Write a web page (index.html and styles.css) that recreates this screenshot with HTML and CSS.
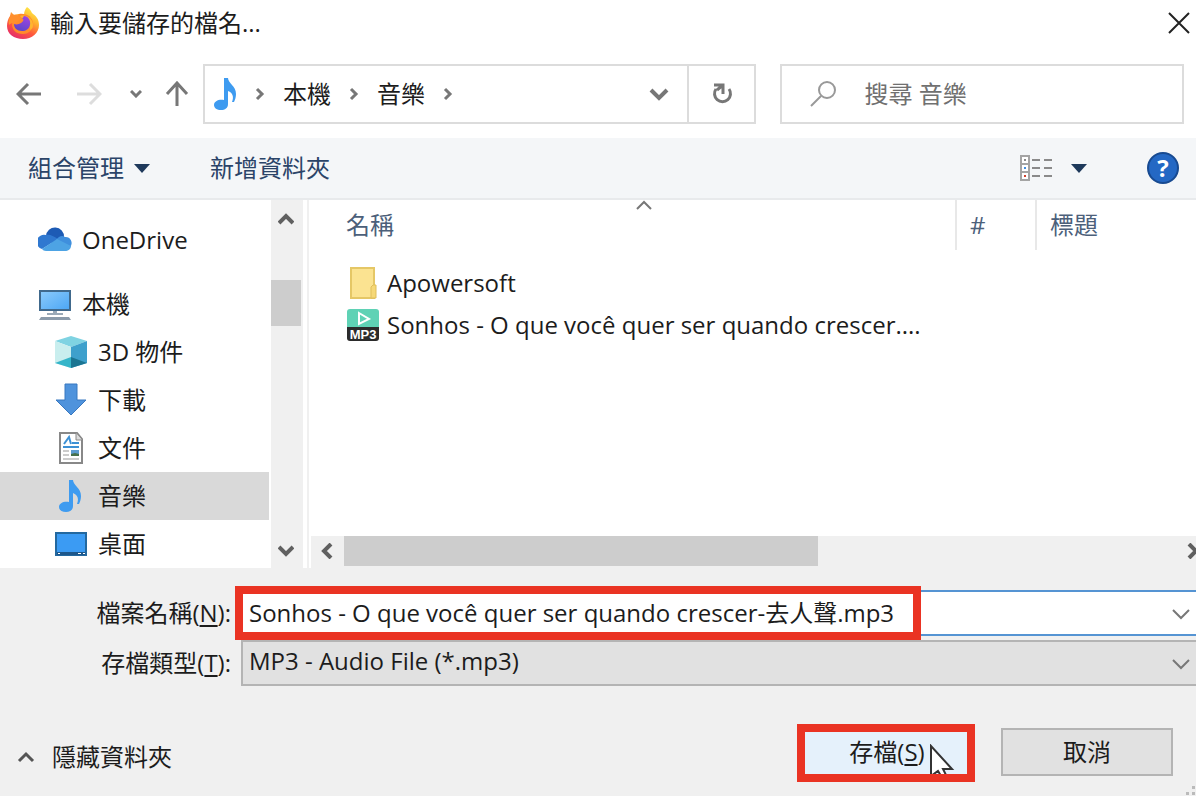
FILE: index.html
```html
<!DOCTYPE html>
<html lang="zh-Hant">
<head>
    <meta charset="UTF-8">
    <title>輸入要儲存的檔名...</title>
    <link rel="stylesheet" href="styles.css">
</head>
<body>

    <!-- title bar -->
    <header class="titlebar">
        <svg class="icon" width="34" height="34" viewBox="0 0 34 34">
            <defs>
                <linearGradient id="fox" x1="0.8" y1="0" x2="0.25" y2="1">
                    <stop offset="0" stop-color="#fff04a"/>
                    <stop offset="0.35" stop-color="#ffb02e"/>
                    <stop offset="0.65" stop-color="#ff5a3c"/>
                    <stop offset="1" stop-color="#e32a6d"/>
                </linearGradient>
                <linearGradient id="globe" x1="0.7" y1="0" x2="0.3" y2="1">
                    <stop offset="0" stop-color="#a044e0"/>
                    <stop offset="1" stop-color="#5b46c8"/>
                </linearGradient>
            </defs>
            <path d="M21 1c3 2 4 4 5 6c4 3 7 6 7 12c0 8-7 14-16 14S1 28 1 20c0-4 1-7 3-10l1-4l3 3c2-1 4-1 6-1c2 0 3 0 4 1c0-3 1-6 3-8z" fill="url(#fox)"/>
            <path d="M13 8c8-1 13 3 14 9c1 6-4 11-10 11c-7 0-11-4-11-10z" fill="#ff8a2b"/>
            <path d="M14 10c7-2 13 3 13 9c0 3-1 4-3 5c1-4-2-9-6-10z" fill="#ffb52e"/>
            <path d="M18 10c4 0 7 4 6 9c-1 4-4 6-8 6c-5 0-8-3-8-7c3 1 5 0 7-1c3-2 3-4 1-4z" fill="url(#globe)"/>
            <path d="M5 9c4-1 8 0 11 4c-3 0-4 2-7 5c-2-1-4-1-6 1c-1-4 0-7 2-10z" fill="#ff8f2d"/>
        </svg>
        <h1>輸入要儲存的檔名...</h1>
        <button class="close" aria-label="關閉">
            <svg width="22" height="22" viewBox="0 0 22 22"><path d="M1 1l20 20M21 1L1 21"/></svg>
        </button>
    </header>

    <!-- navigation -->
    <nav class="navbar">
        <button class="nav-btn" aria-label="上一頁">
            <svg width="26" height="24" viewBox="0 0 26 24"><path d="M25 12H3M12 2L2 12l10 10"/></svg>
        </button>
        <button class="nav-btn off" aria-label="下一頁">
            <svg width="26" height="24" viewBox="0 0 26 24"><path d="M1 12h22M14 2l10 10l-10 10"/></svg>
        </button>
        <button class="nav-btn small" aria-label="最近的位置">
            <svg width="12" height="8" viewBox="0 0 12 8"><path d="M1 1l5 5l5-5"/></svg>
        </button>
        <button class="nav-btn up" aria-label="上一層">
            <svg width="24" height="26" viewBox="0 0 24 26"><path d="M12 25V3M2 13L12 2l10 11"/></svg>
        </button>
        <div class="address">
            <svg class="icon" width="24" height="34" viewBox="4 0 24 34"><use href="#note"/></svg>
            <svg class="sep" width="10" height="14" viewBox="0 0 10 14"><path d="M2 2l5 5l-5 5"/></svg>
            <a href="#">本機</a>
            <svg class="sep" width="10" height="14" viewBox="0 0 10 14"><path d="M2 2l5 5l-5 5"/></svg>
            <a href="#">音樂</a>
            <svg class="sep" width="10" height="14" viewBox="0 0 10 14"><path d="M2 2l5 5l-5 5"/></svg>
            <button class="history" aria-label="先前的位置">
                <svg width="20" height="14" viewBox="0 0 20 14"><path d="M2 3l8 8l8-8"/></svg>
            </button>
            <button class="refresh" aria-label="重新整理">
                <svg width="22" height="24" viewBox="0 0 22 24"><path d="M18 7a8 8 0 1 1-13 0M3 3h9v9M12 3L6 8"/></svg>
            </button>
        </div>
        <label class="search">
            <svg width="26" height="26" viewBox="0 0 26 26"><circle cx="17" cy="9" r="8"/><path d="M11 15L1 25"/></svg>
            <input type="search" placeholder="搜尋 音樂" aria-label="搜尋 音樂">
        </label>
    </nav>

    <!-- command bar -->
    <div class="toolbar">
        <button>組合管理 <svg width="16" height="9" viewBox="0 0 16 9"><path d="M0 0h16L8 9z"/></svg></button>
        <button>新增資料夾</button>
        <button class="view" aria-label="變更檢視">
            <svg class="icon" width="34" height="28" viewBox="0 0 34 28">
                <path d="M2 2h8v24H2zM2 10h8M2 18h8" fill="#fff" stroke="#a4a4a4" stroke-width="2"/>
                <path d="M13 6h8M25 6h8M13 14h8M25 14h8M13 22h8M25 22h8" stroke="#8a8a8a" stroke-width="2"/>
                <path d="M5 5h2v2H5z" fill="#888"/>
                <path d="M5 13h2v2H5z" fill="#3f8de0"/>
                <path d="M5 21h2v2H5z" fill="#d0402b"/>
            </svg>
            <svg width="16" height="9" viewBox="0 0 16 9"><path d="M0 0h16L8 9z"/></svg>
        </button>
        <button class="help" aria-label="說明">?</button>
    </div>

    <main class="content">
        <ul class="tree">
            <li class="root">
                <svg class="icon" width="34" height="34" viewBox="0 0 34 34">
                    <path d="M8 13a9 9 0 0 1 18 1L15 21z" fill="#1d5bb5"/>
                    <path d="M8 12c4-1 7 1 12 4L4 26a7 7 0 0 1 4-14z" fill="#2f78d0"/>
                    <path d="M18 17c3-4 6-5 9-3a6 6 0 0 1 5 10z" fill="#3f8fdd"/>
                    <path d="M4 26l15-10l14 7c0 3-3 5-6 5H8c-2 0-3-1-4-2z" fill="#4da3e4"/>
                </svg>
                <a href="#">OneDrive</a>
            </li>
            <li class="root pc">
                <svg class="icon" width="34" height="34" viewBox="0 0 34 34">
                    <defs><linearGradient id="screen" x1="0" y1="0" x2="1" y2="1"><stop offset="0" stop-color="#8ccbfb"/><stop offset="1" stop-color="#4ba6f5"/></linearGradient></defs>
                    <path d="M2 4h30v19H2z" fill="url(#screen)" stroke="#40698c" stroke-width="2"/>
                    <path d="M9 26h16v2H9zM15 24h4v2h-4z" fill="#9aa9b7"/>
                    <path d="M3 30h28l2 3H1z" fill="#8b9bab"/>
                </svg>
                <a href="#">本機</a>
            </li>
            <li>
                <svg class="icon" width="34" height="34" viewBox="0 0 34 34">
                    <path d="M1 6l16-5l16 5l-16 6z" fill="#7fd3e2"/>
                    <path d="M1 6l16 6v21L1 28z" fill="#c9eeee"/>
                    <path d="M33 6l-16 6v21l16-5z" fill="#3ea0cc"/>
                    <path d="M1 28l16-6v11z" fill="#35b5c9"/>
                    <path d="M17 22l16 6l-16 5z" fill="#1b7592"/>
                </svg>
                <a href="#">3D 物件</a>
            </li>
            <li>
                <svg class="icon" width="34" height="34" viewBox="0 0 34 34"><path d="M11 1h12v16h9L17 32L2 17h9z" fill="#4f93dc" stroke="#3978c0"/></svg>
                <a href="#">下載</a>
            </li>
            <li>
                <svg class="icon" width="34" height="34" viewBox="0 0 34 34">
                    <path d="M6 2h17l5 6v24H6z" fill="#fff" stroke="#888" stroke-width="2"/>
                    <path d="M22 2v7h6" fill="#ddd" stroke="#888"/>
                    <path d="M10 13l5-7l2 7M18 12h7M9 16h16" fill="none" stroke="#3d91d5" stroke-width="2"/>
                    <path d="M9 20h6M9 24h6M9 28h16" stroke="#999"/>
                    <path d="M17 19h8v6h-8z" fill="#5b9bd0"/>
                    <path d="M17 23l4-1l4 1v2h-8z" fill="#46704b"/>
                </svg>
                <a href="#">文件</a>
            </li>
            <li class="selected">
                <svg class="icon" width="34" height="34" viewBox="0 0 34 34">
                    <path id="note" d="M15 1h4c0 5 8 8 8 16c0 3-1 6-2 8h-2c2-5 1-9-4-11v13c0 4-3 6-7 6c-4 0-7-2-7-5c0-4 5-6 10-5z" fill="#3e9bf0"/>
                </svg>
                <a href="#">音樂</a>
            </li>
            <li>
                <svg class="icon" width="34" height="34" viewBox="0 0 34 34">
                    <path d="M2 6h30v22H2z" fill="#3b9bf3" stroke="#23689f" stroke-width="2"/>
                    <path d="M3 25h28v3H3z" fill="#1d578b"/>
                    <path d="M4 26h2v1H4zM24 26h3v1h-3zM29 26h2v1h-2z" fill="#fff"/>
                </svg>
                <a href="#">桌面</a>
            </li>
        </ul>
        <div class="vscroll">
            <svg width="16" height="14" viewBox="0 0 16 14"><path d="M1 11l7-7l7 7"/></svg>
            <div class="thumb"></div>
            <svg width="16" height="14" viewBox="0 0 16 14"><path d="M1 3l7 7l7-7"/></svg>
        </div>

        <section class="files">
            <table>
                <thead>
                    <tr>
                        <th class="name">名稱
                            <svg class="sort" width="18" height="10" viewBox="0 0 18 10"><path d="M2 9l7-7l7 7"/></svg>
                        </th>
                        <th class="num">#</th>
                        <th>標題</th>
                    </tr>
                </thead>
                <tbody>
                    <tr>
                        <td colspan="3">
                            <div class="file">
                                <svg class="icon" width="34" height="34" viewBox="0 0 34 34">
                                    <path d="M5 2h23v30H5z" fill="#fbe391" stroke="#e5c766" stroke-width="2"/>
                                    <path d="M25 32V21l2-2h3v13z" fill="#f6d877" stroke="#dfbe5a"/>
                                </svg>
                                Apowersoft
                            </div>
                        </td>
                    </tr>
                    <tr>
                        <td colspan="3">
                            <div class="file">
                                <svg class="icon" width="34" height="34" viewBox="0 0 34 34">
                                    <path d="M4 1h26q3 0 3 3v15H1V4q0-3 3-3z" fill="#5fd2b5"/>
                                    <path d="M1 19h32v11q0 3-3 3H4q-3 0-3-3z" fill="#2b2b2b"/>
                                    <path d="M13 5l10 6l-10 5z" fill="none" stroke="#fff" stroke-width="2"/>
                                    <text x="17" y="31" class="mp3">MP3</text>
                                </svg>
                                Sonhos - O que você quer ser quando crescer....
                            </div>
                        </td>
                    </tr>
                </tbody>
            </table>
            <div class="hscroll">
                <svg width="14" height="16" viewBox="0 0 14 16"><path d="M11 1L4 8l7 7"/></svg>
                <div class="track">
                    <div class="thumb"></div>
                </div>
                <svg class="right" width="14" height="16" viewBox="0 0 14 16"><path d="M3 1l7 7l-7 7"/></svg>
            </div>
        </section>
    </main>

    <form class="bottom">
        <div class="field">
            <label for="filename">檔案名稱(<u>N</u>):</label>
            <div class="box">
                <input type="text" id="filename" value="Sonhos - O que você quer ser quando crescer-去人聲.mp3">
                <svg class="arrow" width="18" height="12" viewBox="0 0 18 12"><path d="M1 2l8 8l8-8"/></svg>
                <span class="mark mark-name"></span>
            </div>
        </div>
        <div class="field">
            <label for="filetype">存檔類型(<u>T</u>):</label>
            <div class="box">
                <select id="filetype">
                    <option>MP3 - Audio File (*.mp3)</option>
                </select>
                <svg class="arrow" width="18" height="12" viewBox="0 0 18 12"><path d="M1 2l8 8l8-8"/></svg>
            </div>
        </div>

        <div class="actions">
            <button type="button" class="fold">
                <svg width="18" height="12" viewBox="0 0 18 12"><path d="M2 10l7-7l7 7"/></svg>
                隱藏資料夾
            </button>
            <div class="save-wrap">
                <button type="button" class="push save">存檔(<u>S</u>)</button>
                <svg class="cursor" width="26" height="30" viewBox="0 0 26 30"><path d="M2 2v30l7-5l5 8l4-2l-4-8h9z"/></svg>
                <span class="mark mark-save"></span>
            </div>
            <button type="button" class="push">取消</button>
        </div>
        <svg class="grip" width="10" height="10" viewBox="0 0 10 10"><path d="M6 0h3v3H6zM0 6h3v3H0zM6 6h3v3H6z"/></svg>
    </form>

</body>
</html>
```
FILE: styles.css
```css
*{
    box-sizing: border-box;
}
body{
    margin: 0;
    min-height: 100vh;
    display: flex;
    flex-direction: column;
    background-color: #fff;
    color: #1c1c1c;
    font: 24px/32px "Open Sans", "Noto Sans CJK TC", sans-serif;
    overflow-x: hidden;
}
button, input, select{
    font: inherit;
    color: inherit;
    border: 0;
    padding: 0;
    margin: 0;
    background: none;
    border-radius: 0;
    outline: none;
}
a{
    color: inherit;
    text-decoration: none;
}
svg{
    flex: none;
    fill: none;
    stroke: #777;
    stroke-width: 3;
}
.icon{
    stroke: none;
    stroke-width: 1;
}

/* title bar */
.titlebar{
    display: flex;
    align-items: center;
    height: 50px;
    padding: 0 6px 4px;
}
h1{
    margin: 0 auto 0 10px;
    font-size: 24px;
    font-weight: normal;
}
.close{
    display: flex;
}
.close svg{
    stroke: #222;
    stroke-width: 2;
}

/* navigation */
.navbar{
    display: flex;
    align-items: center;
    height: 88px;
    padding: 0 12px 0 16px;
}
.nav-btn{
    display: flex;
    margin-right: 34px;
}
.nav-btn.off svg{
    stroke: #ddd;
}
.nav-btn.off{
    margin-right: 28px;
}
.nav-btn.small{
    margin-right: 23px;
}
.nav-btn.up{
    margin-right: 14px;
}
.address{
    flex: 542;
    display: flex;
    align-items: center;
    gap: 18px;
    height: 60px;
    padding-left: 8px;
    border: 2px solid #dcdcdc;
}
.history{
    display: flex;
    margin-left: auto;
}
.history svg{
    stroke-width: 4;
}
.refresh{
    display: flex;
    align-items: center;
    justify-content: center;
    align-self: stretch;
    width: 67px;
    border-left: 2px solid #dcdcdc;
}
.search{
    flex: 372;
    display: flex;
    align-items: center;
    gap: 28px;
    height: 60px;
    margin-left: 24px;
    padding-left: 28px;
    border: 2px solid #dcdcdc;
}
.search svg{
    stroke: #999;
    stroke-width: 2;
}
.search input{
    flex: 1;
    min-width: 0;
}
.search input::placeholder{
    color: #707070;
}

/* command bar */
.toolbar{
    display: flex;
    align-items: center;
    height: 62px;
    padding: 0 17px 0 28px;
    background-color: #f4f6f8;
    border-bottom: 2px solid #e8eaec;
    color: #2b4468;
}
.toolbar button{
    display: flex;
    align-items: center;
    gap: 10px;
    margin-right: 60px;
}
.toolbar button > svg:last-child{
    fill: #1e395b;
    stroke: none;
}
.toolbar .view{
    gap: 18px;
    margin-left: auto;
}
.toolbar .help{
    justify-content: center;
    width: 32px;
    height: 32px;
    margin-right: 0;
    border: 2px solid #174a91;
    border-radius: 50%;
    background-color: #2468c4;
    color: #fff;
    font-weight: bold;
}

/* folder tree */
.content{
    flex: 1;
    display: flex;
}
.tree{
    width: 269px;
    margin: 0;
    padding: 16px 0 0;
    list-style: none;
}
.tree li{
    display: flex;
    align-items: center;
    gap: 10px;
    height: 48px;
    padding-left: 54px;
}
.tree .root{
    padding-left: 38px;
}
.tree .pc{
    margin-top: 16px;
}
.tree .selected{
    background-color: #d9d9d9;
}
.vscroll{
    display: flex;
    flex-direction: column;
    align-items: center;
    width: 32px;
    margin-left: 2px;
    padding: 12px 2px 10px 0;
    background-color: #f0f0f0;
}
.vscroll svg, .hscroll svg{
    stroke: #606060;
    stroke-width: 4;
}
.thumb{
    background-color: #cdcdcd;
}
.vscroll .thumb{
    width: 30px;
    height: 46px;
    margin: 54px 0 auto;
}

/* file list */
.files{
    flex: 1;
    min-width: 0;
    display: flex;
    flex-direction: column;
    justify-content: space-between;
    margin-left: 4px;
    border-left: 2px solid #f0f0f0;
}
table{
    width: 100%;
    table-layout: fixed;
    border-collapse: collapse;
}
th{
    position: relative;
    height: 50px;
    padding: 0 0 0 13px;
    color: #4c607a;
    font-weight: normal;
    text-align: left;
    border-left: 2px solid #e8e8e8;
}
th.name{
    width: 647px;
    padding-left: 37px;
    border-left: 0;
}
th.num{
    width: 80px;
}
.sort{
    position: absolute;
    top: 0;
    left: 326px;
    stroke-width: 2;
}
tbody tr:first-child td{
    padding-top: 12px;
}
td{
    padding: 0 0 0 37px;
}
.file{
    display: flex;
    align-items: center;
    gap: 7px;
    height: 42px;
    white-space: nowrap;
}
.mp3{
    fill: #fff;
    font: bold 13px "Liberation Sans", sans-serif;
    text-anchor: middle;
}
.hscroll{
    display: flex;
    align-items: center;
    height: 32px;
    margin-left: 2px;
    padding: 0 0 2px 9px;
    background-color: #f0f0f0;
    overflow: hidden;
}
.track{
    flex: 1;
    padding: 0 10px;
}
.hscroll .thumb{
    width: 57%;
    height: 30px;
}
.hscroll .right{
    margin-right: -4px;
}

/* file name, type and buttons */
.bottom{
    position: relative;
    padding: 22px 0 20px;
    background-color: #f0f0f0;
}
.field{
    display: flex;
    align-items: center;
    margin-bottom: 4px;
}
.field label{
    width: 241px;
    padding-right: 10px;
    text-align: right;
}
u{
    text-underline-offset: 3px;
    text-decoration-thickness: 2px;
}
.box{
    position: relative;
    flex: 1;
}
.box input, .box select{
    display: block;
    width: 100%;
    height: 46px;
    padding: 0 40px 4px 6px;
    border: 2px solid #5594d3;
    border-right: 0;
    background-color: #fff;
}
.box select{
    appearance: none;
    border-color: #b4b4b4;
    background-color: #e1e1e1;
}
.arrow{
    position: absolute;
    top: 18px;
    right: 6px;
    stroke-width: 2;
}
.mark{
    position: absolute;
    border: 8px solid #ea3323;
    pointer-events: none;
}
.mark-name{
    z-index: 1;
    top: -4px;
    left: -6px;
    width: 686px;
    height: 54px;
}
.actions{
    display: flex;
    align-items: center;
    gap: 28px;
    margin-top: 42px;
    padding: 0 23px 0 17px;
}
.fold{
    display: flex;
    align-items: center;
    gap: 17px;
    margin-top: 10px;
    margin-right: auto;
}
.fold svg{
    stroke: #555;
}
.save-wrap{
    position: relative;
}
.push{
    width: 172px;
    height: 48px;
    border: 2px solid #b4b4b4;
    background-color: #e1e1e1;
}
.save{
    display: block;
    border-color: #e5f1fb;
    background-color: #e5f1fb;
}
.mark-save{
    inset: -4px -2px -6px -4px;
}
.cursor{
    position: absolute;
    right: 18px;
    bottom: 2px;
    fill: #fff;
    stroke: #333;
    stroke-width: 2;
}
.grip{
    position: absolute;
    right: 0;
    bottom: 0;
    fill: #bbb;
    stroke: none;
}
```
